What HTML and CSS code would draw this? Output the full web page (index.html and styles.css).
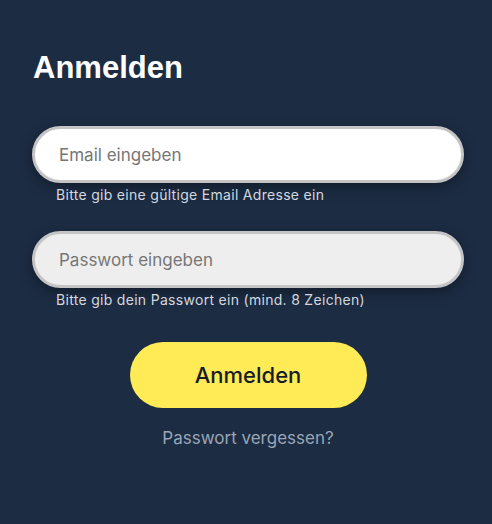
FILE: index.html
```
<!DOCTYPE html>
<html lang="de">
<head>
<meta charset="utf-8">
<title>Anmelden</title>
<link rel="stylesheet" href="styles.css">
</head>
<body>
<main class="login">
  <h1 class="login-title">Anmelden</h1>
  <form class="login-form">
    <div class="field">
      <input class="field-input" type="email" placeholder="Email eingeben">
      <p class="field-hint">Bitte gib eine gültige Email Adresse ein</p>
    </div>
    <div class="field">
      <input class="field-input field-input--muted" type="password" placeholder="Passwort eingeben">
      <p class="field-hint">Bitte gib dein Passwort ein (mind. 8 Zeichen)</p>
    </div>
    <div class="actions">
      <button class="btn-primary" type="button">Anmelden</button>
      <a class="link-forgot" href="#">Passwort vergessen?</a>
    </div>
  </form>
</main>
</body>
</html>
```
FILE: styles.css
```
html, body {
  margin: 0;
  height: 100%;
}

body {
  background: #1c2c43;
  font-family: "Inter", "Noto Sans", sans-serif;
}

.login {
  padding: 50px 28px 0 32px;
}

.login-title {
  margin: 0 0 40px 1px;
  font-family: "Liberation Sans", Arial, sans-serif;
  font-weight: 700;
  font-size: 31px;
  line-height: 36px;
  color: #ffffff;
}

.login-form {
  display: flex;
  flex-direction: column;
}

.field {
  display: flex;
  flex-direction: column;
  margin-bottom: 27px;
}

.field-input {
  box-sizing: border-box;
  height: 57px;
  width: 100%;
  padding: 0 24px;
  border: 3px solid #c4c4c4;
  border-radius: 30px;
  background: #ffffff;
  box-shadow: 0 4px 14px rgba(0, 0, 0, 0.35);
  font-family: inherit;
  font-size: 17px;
  color: #333;
  outline: none;
}

.field-input--muted {
  background: #eeeeee;
}

.field-input::placeholder {
  color: #767676;
}

.field-hint {
  margin: 3px 0 0 24px;
  font-size: 14px;
  letter-spacing: 0.3px;
  line-height: 18px;
  color: #d4d8de;
}

.actions {
  display: flex;
  flex-direction: column;
  align-items: center;
  margin-top: 6px;
}

.btn-primary {
  width: 237px;
  height: 66px;
  border: none;
  border-radius: 33px;
  background: #ffeb55;
  font-family: inherit;
  font-size: 22px;
  font-weight: 500;
  color: #161c28;
  cursor: pointer;
}

.link-forgot {
  margin-top: 20px;
  font-size: 17px;
  color: #9aa6b5;
  text-decoration: none;
}
```
